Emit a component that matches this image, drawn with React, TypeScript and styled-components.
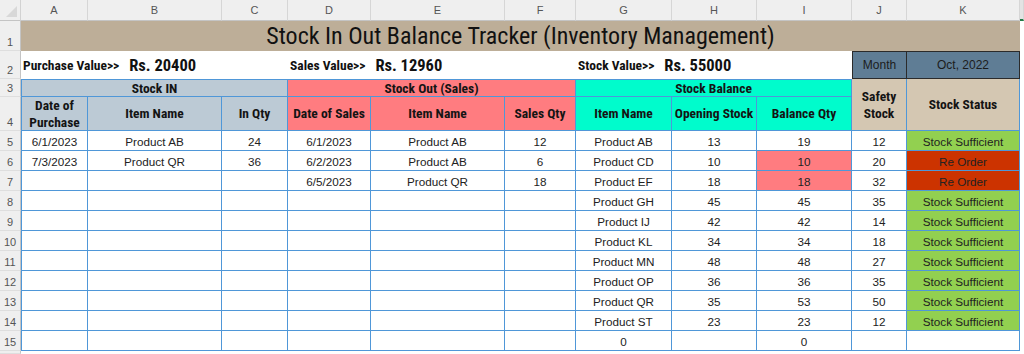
import React from "react";
import styled, { createGlobalStyle } from "styled-components";

const GlobalStyle = createGlobalStyle`
  html, body { margin: 0; padding: 0; background: #ffffff; overflow: hidden; }
  body { font-family: "Liberation Sans", Arial, sans-serif; }
`;

const BLUE = "#4f97d8";
const COND = `Roboto, "Open Sans", "Liberation Sans", sans-serif`;
const ARIAL = `"Liberation Sans", Arial, sans-serif`;

const Sheet = styled.div`
  display: grid;
  width: 1024px;
  height: 354px;
  grid-template-columns: 21px 67px 134px 66px 83px 134px 71px 96px 85px 95px 55px 113px 1fr;
  grid-template-rows: 21px 30px 28px 18px 34px repeat(11, 20px) 1fr;
  overflow: hidden;
  background: #ffffff;
`;

const Corner = styled.div`
  position: relative;
  background: #efefef;
  border-right: 1px solid #d2d2d2;
  border-bottom: 1px solid #c4c4c4;
  box-sizing: border-box;
  &::after {
    content: "";
    position: absolute;
    right: 3px;
    bottom: 3px;
    width: 0;
    height: 0;
    border-left: 11px solid transparent;
    border-bottom: 11px solid #d8d8d8;
  }
`;

const ColHeader = styled.div<{ $active?: boolean }>`
  display: flex;
  align-items: center;
  justify-content: center;
  background: ${(p) => (p.$active ? "#e3e3e3" : "#efefef")};
  border-right: 1px solid #d6d6d6;
  border-bottom: ${(p) => (p.$active ? "2px solid #1f7a45" : "1px solid #c4c4c4")};
  box-sizing: border-box;
  font-family: ${ARIAL};
  font-size: 11px;
  color: #555555;
`;

const RowHeader = styled.div`
  grid-column: 1;
  display: flex;
  align-items: flex-end;
  justify-content: center;
  padding-bottom: 2px;
  background: #efefef;
  border-right: 1px solid #c4c4c4;
  border-bottom: 1px solid #dedede;
  box-sizing: border-box;
  font-family: ${ARIAL};
  font-size: 11px;
  color: #555555;
`;

const TitleCell = styled.div`
  grid-column: span 11;
  display: flex;
  align-items: center;
  justify-content: center;
  background: #bdae98;
  font-family: ${COND};
  font-stretch: 78%;
  font-weight: 400;
  font-size: 24px;
  color: #111111;
  white-space: nowrap;
`;

const InfoGroup = styled.div`
  grid-column: span 3;
  display: flex;
  align-items: center;
  gap: 10px;
  padding-left: 2px;
  white-space: nowrap;
  color: #111111;
  font-family: ${COND};
  font-weight: 700;
`;

const InfoLabel = styled.span`
  font-size: 13.5px;
  font-stretch: 81%;
`;

const InfoValue = styled.span`
  font-size: 16.5px;
  font-stretch: 78%;
`;

const MonthCell = styled.div`
  display: flex;
  align-items: center;
  justify-content: center;
  background: #5f7d95;
  border: 1px solid #2b2b2b;
  box-sizing: border-box;
  font-family: ${ARIAL};
  font-size: 12px;
  color: #1c1c1c;
  & + & {
    border-left: none;
  }
`;

const Band = styled.div<{ $bg: string; $span?: number; $rows?: number; $top?: boolean; $left?: boolean }>`
  grid-column: span ${(p) => p.$span ?? 1};
  grid-row: span ${(p) => p.$rows ?? 1};
  display: flex;
  align-items: center;
  justify-content: center;
  text-align: center;
  background: ${(p) => p.$bg};
  border-right: 1px solid ${BLUE};
  border-bottom: 1px solid ${BLUE};
  border-top: ${(p) => (p.$top ? `1px solid ${BLUE}` : "none")};
  border-left: ${(p) => (p.$left ? `1px solid ${BLUE}` : "none")};
  box-sizing: border-box;
  font-family: ${COND};
  font-stretch: 82%;
  font-weight: 700;
  font-size: 13.5px;
  line-height: 16.5px;
  color: #141414;
  white-space: nowrap;
`;

type Tone = "plain" | "low" | "ok" | "order";

const toneBg: Record<Tone, string> = {
  plain: "#ffffff",
  low: "#ff7c80",
  ok: "#92d050",
  order: "#cc3300",
};

const DataCell = styled.div<{ $tone?: Tone; $left?: boolean }>`
  display: flex;
  align-items: center;
  justify-content: center;
  padding-top: 1px;
  background: ${(p) => toneBg[p.$tone ?? "plain"]};
  border-right: 1px solid ${BLUE};
  border-bottom: 1px solid ${BLUE};
  border-left: ${(p) => (p.$left ? `1px solid ${BLUE}` : "none")};
  box-sizing: border-box;
  font-family: ${ARIAL};
  font-size: 11.7px;
  color: #222222;
  white-space: nowrap;
`;

const COLS = ["A", "B", "C", "D", "E", "F", "G", "H", "I", "J", "K"];

type Row = {
  a?: string; b?: string; c?: string;
  d?: string; e?: string; f?: string;
  g?: string; h?: string; i?: string; iLow?: boolean;
  j?: string; k?: string;
};

const rows: Row[] = [
  { a: "6/1/2023", b: "Product AB", c: "24", d: "6/1/2023", e: "Product AB", f: "12", g: "Product AB", h: "13", i: "19", j: "12", k: "Stock Sufficient" },
  { a: "7/3/2023", b: "Product QR", c: "36", d: "6/2/2023", e: "Product AB", f: "6", g: "Product CD", h: "10", i: "10", iLow: true, j: "20", k: "Re Order" },
  { d: "6/5/2023", e: "Product QR", f: "18", g: "Product EF", h: "18", i: "18", iLow: true, j: "32", k: "Re Order" },
  { g: "Product GH", h: "45", i: "45", j: "35", k: "Stock Sufficient" },
  { g: "Product IJ", h: "42", i: "42", j: "14", k: "Stock Sufficient" },
  { g: "Product KL", h: "34", i: "34", j: "18", k: "Stock Sufficient" },
  { g: "Product MN", h: "48", i: "48", j: "27", k: "Stock Sufficient" },
  { g: "Product OP", h: "36", i: "36", j: "35", k: "Stock Sufficient" },
  { g: "Product QR", h: "35", i: "53", j: "50", k: "Stock Sufficient" },
  { g: "Product ST", h: "23", i: "23", j: "12", k: "Stock Sufficient" },
  { g: "0", i: "0" },
];

const statusTone = (k?: string): Tone =>
  k === "Stock Sufficient" ? "ok" : k === "Re Order" ? "order" : "plain";

const C_IN = "#bccad5";
const C_OUT = "#ff7c80";
const C_BAL = "#00fccc";
const C_STAT = "#d4c7b2";

export default function App() {
  return (
    <>
      <GlobalStyle />
      <Sheet>
        <Corner />
        {COLS.map((c) => (
          <ColHeader key={c}>{c}</ColHeader>
        ))}
        <ColHeader $active />

        <RowHeader>1</RowHeader>
        <TitleCell>Stock In Out Balance Tracker (Inventory Management)</TitleCell>

        <RowHeader>2</RowHeader>
        <InfoGroup>
          <InfoLabel>Purchase Value&gt;&gt;</InfoLabel>
          <InfoValue>Rs. 20400</InfoValue>
        </InfoGroup>
        <InfoGroup>
          <InfoLabel>Sales Value&gt;&gt;</InfoLabel>
          <InfoValue>Rs. 12960</InfoValue>
        </InfoGroup>
        <InfoGroup>
          <InfoLabel>Stock Value&gt;&gt;</InfoLabel>
          <InfoValue>Rs. 55000</InfoValue>
        </InfoGroup>
        <MonthCell>Month</MonthCell>
        <MonthCell>Oct, 2022</MonthCell>

        <RowHeader>3</RowHeader>
        <Band $bg={C_IN} $span={3} $top $left>Stock IN</Band>
        <Band $bg={C_OUT} $span={3} $top>Stock Out (Sales)</Band>
        <Band $bg={C_BAL} $span={3} $top>Stock Balance</Band>
        <Band $bg={C_STAT} $rows={2}>Safety<br />Stock</Band>
        <Band $bg={C_STAT} $rows={2}>Stock Status</Band>

        <RowHeader>4</RowHeader>
        <Band $bg={C_IN} $left>Date of<br />Purchase</Band>
        <Band $bg={C_IN}>Item Name</Band>
        <Band $bg={C_IN}>In Qty</Band>
        <Band $bg={C_OUT}>Date of Sales</Band>
        <Band $bg={C_OUT}>Item Name</Band>
        <Band $bg={C_OUT}>Sales Qty</Band>
        <Band $bg={C_BAL}>Item Name</Band>
        <Band $bg={C_BAL}>Opening Stock</Band>
        <Band $bg={C_BAL}>Balance Qty</Band>

        {rows.map((r, idx) => (
          <React.Fragment key={idx}>
            <RowHeader>{idx + 5}</RowHeader>
            <DataCell $left>{r.a}</DataCell>
            <DataCell>{r.b}</DataCell>
            <DataCell>{r.c}</DataCell>
            <DataCell>{r.d}</DataCell>
            <DataCell>{r.e}</DataCell>
            <DataCell>{r.f}</DataCell>
            <DataCell>{r.g}</DataCell>
            <DataCell>{r.h}</DataCell>
            <DataCell $tone={r.iLow ? "low" : "plain"}>{r.i}</DataCell>
            <DataCell>{r.j}</DataCell>
            <DataCell $tone={statusTone(r.k)}>{r.k}</DataCell>
          </React.Fragment>
        ))}
        <RowHeader />
      </Sheet>
    </>
  );
}
